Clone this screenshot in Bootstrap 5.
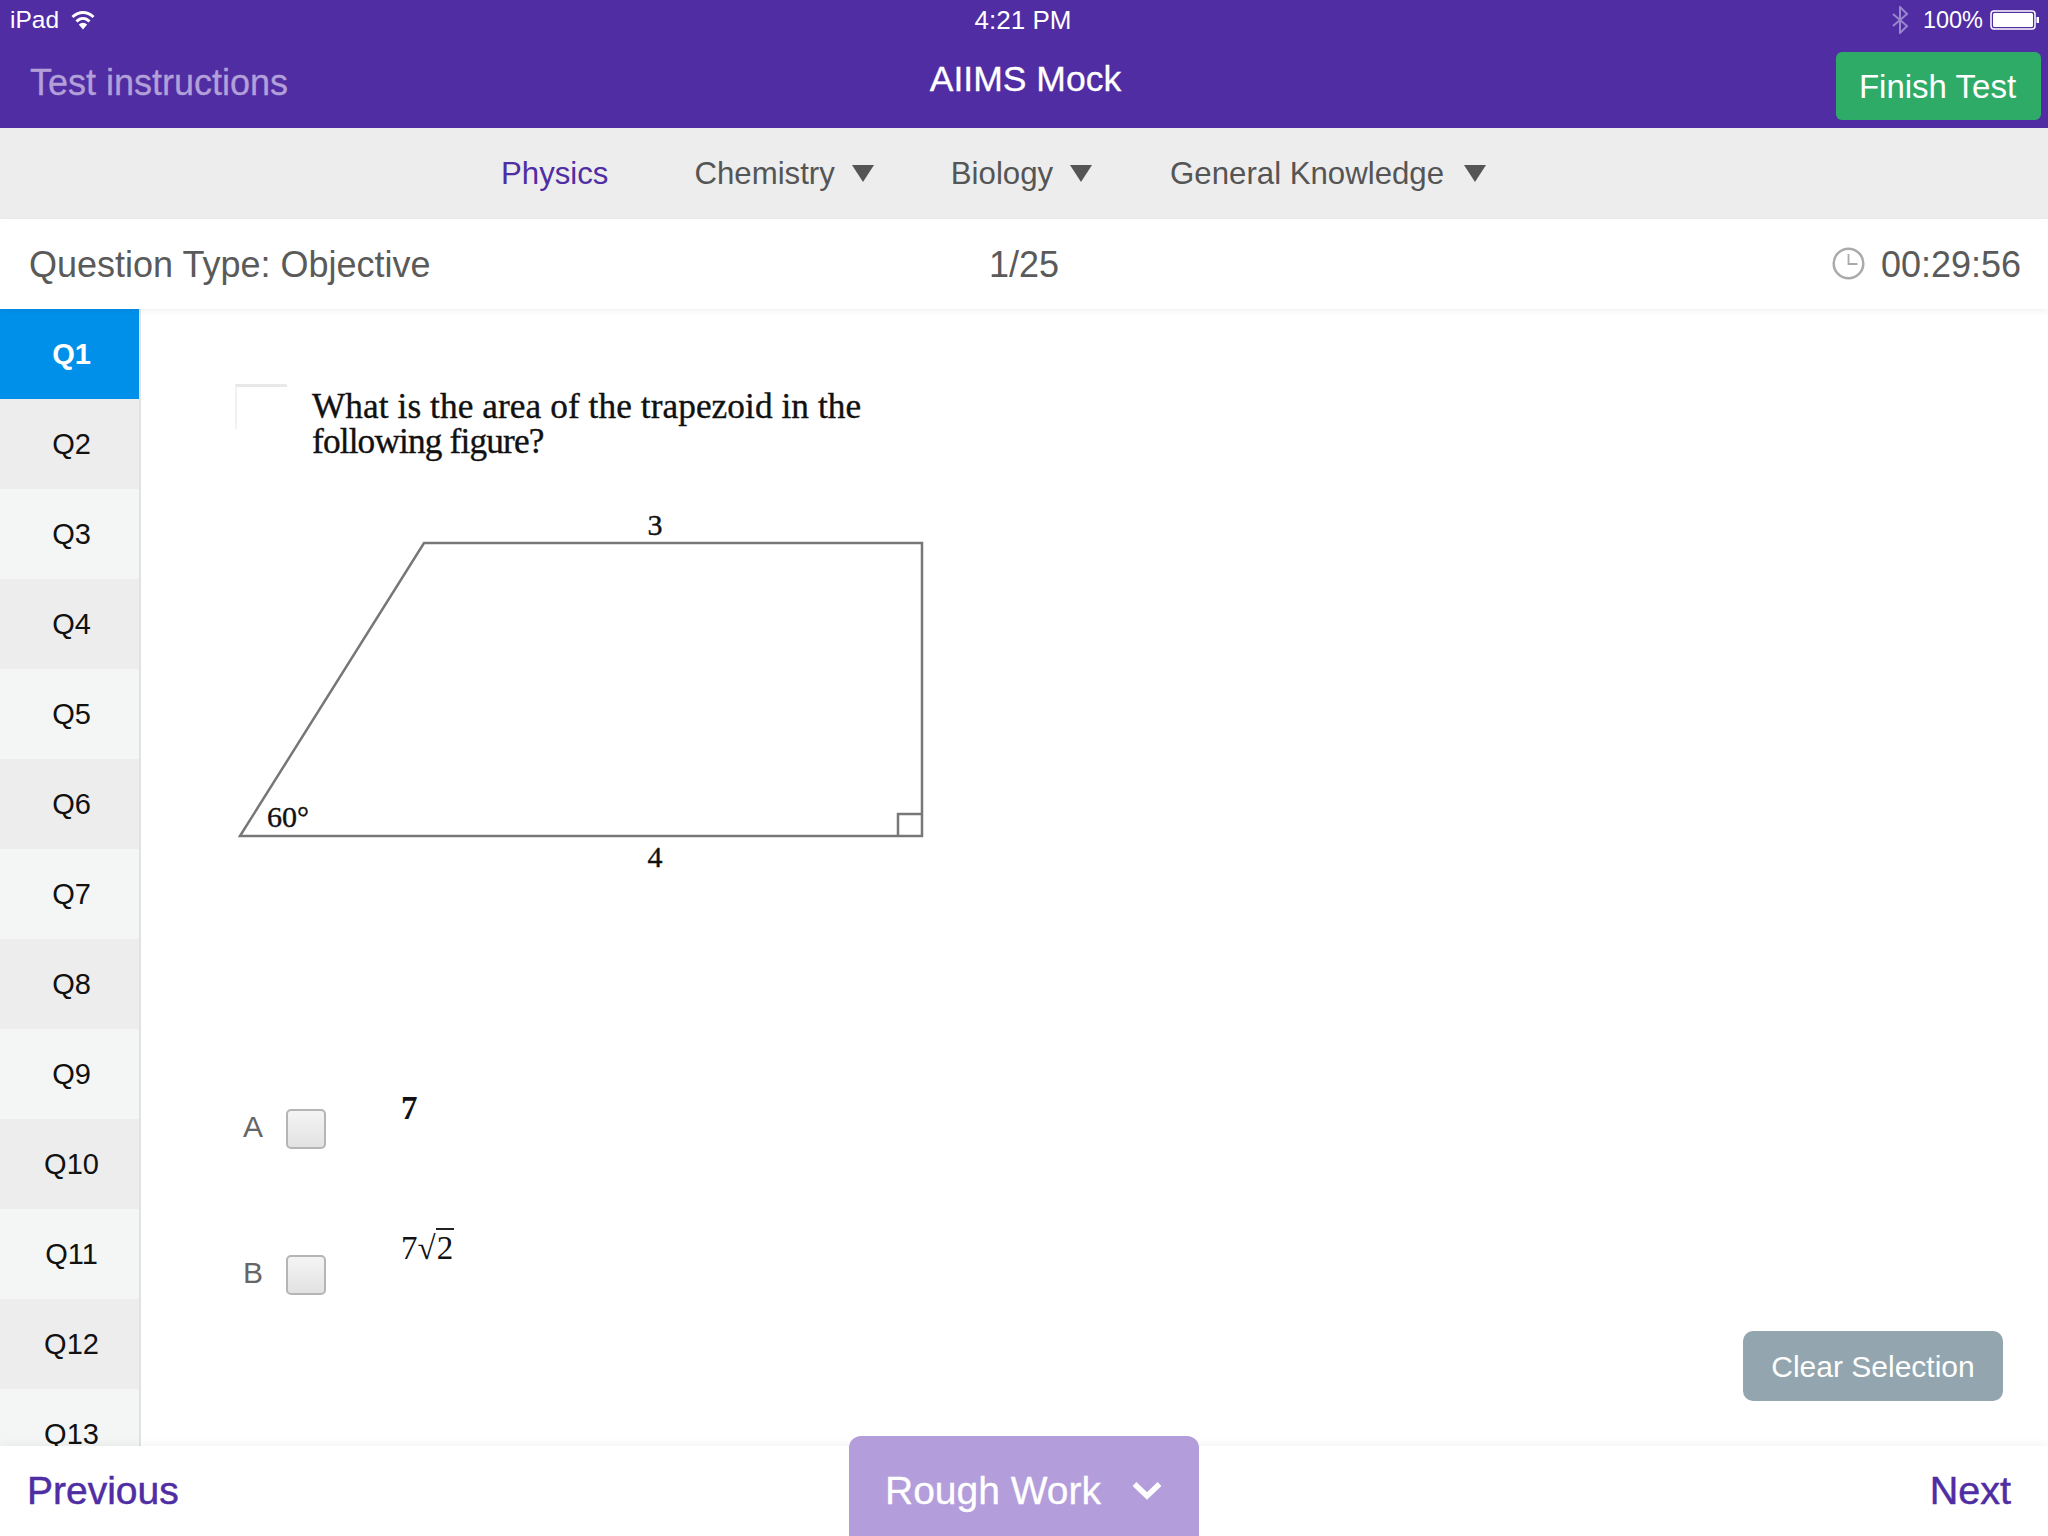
<!DOCTYPE html>
<html lang="en">
<head>
<meta charset="utf-8">
<title>AIIMS Mock</title>
<link href="https://cdn.jsdelivr.net/npm/bootstrap@5.3.0/dist/css/bootstrap.min.css" rel="stylesheet">
<style>
html,body{height:100%;}
body{width:2048px;height:1536px;overflow:hidden;font-family:"Liberation Sans",Arial,sans-serif;color:#555;background:#fff;}
.shell{height:1536px;}
.top-head{background:#502da3;height:128px;flex:none;}
.status-row{height:40px;padding:0 8px 0 10px;color:#fff;font-size:24.500px;line-height:40px;}
.status-side{flex:1 1 0;}
.status-time{font-size:26px;margin-left:-4px;}
.status-pct{font-size:23.500px;margin-right:7px;}
.wifi-mark{margin-left:4px;}
.bt-mark{margin-right:14px;}
.title-row{height:88px;padding:0 7px 0 30px;}
.test-link{flex:1 1 0;color:#b3a0d9;font-size:36px;text-decoration:none;margin-top:-3px;-webkit-text-stroke:.3px #b3a0d9;}
.test-name{color:#fff;font-size:35.500px;margin-top:-8px;margin-left:-20px;-webkit-text-stroke:.3px #fff;}
.title-end{flex:1 1 0;}
.finish-btn{background:#2fab68;border:0;color:#fff;font-size:33px;width:205px;height:68px;border-radius:6px;padding:2px 2px 0 0;margin-top:4px;}
.subject-bar{background:#ededed;height:91px;flex:none;padding:2px 0 0 501px;font-size:31.200px;color:#555;}
.subject-item{color:#555;text-decoration:none;}
.subject-item.on{color:#4f2da3;}
.subject-gap-a{margin-left:86px;}
.subject-gap-b{margin-left:77px;}
.subject-gap-c{margin-left:78px;}
.subject-tri{width:0;height:0;border-left:11.500px solid transparent;border-right:11.500px solid transparent;border-top:17px solid #555;margin-top:-2px;margin-left:17px;}
.subject-tri.wide-gap{margin-left:20px;}
.info-bar{height:90px;flex:none;padding:2px 27px 0 29px;font-size:36px;color:#5a5a5a;position:relative;z-index:2;box-shadow:0 2px 6px rgba(0,0,0,.06);background:#fff;}
.info-side{flex:1 1 0;}
.info-mid{margin-left:-2px;}
.clock-mark{margin-top:-4px;}
.content-row{flex:1 1 0;min-height:0;}
.q-rail{width:141px;flex:none;border-right:2px solid #e2e2e2;overflow:hidden;}
.q-item{height:90px;flex:none;color:#111;font-size:29px;padding:1px 0 0 4px;}
.q-item:nth-child(even){background:#ededed;}
.q-item:nth-child(odd){background:#f4f6f5;}
.q-item.on{background:#0090ea;color:#fff;font-weight:700;}
.q-pane{flex:1 1 0;min-width:0;padding:75px 45px 45px 94px;}
.q-head{gap:25px;flex:none;}
.q-mark{width:52px;height:45px;flex:none;border-top:3px solid #e8e8e8;border-left:2px solid #f2f2f2;}
.q-text{font-family:"Liberation Serif","Times New Roman",serif;font-size:35.300px;line-height:35px;color:#111;padding-top:5px;-webkit-text-stroke:.35px #111;letter-spacing:.06px;}
.q-line-two{letter-spacing:-.85px;}
.figure-box{display:block;flex:none;margin:46px 0 0 -3px;}
.opt-row{height:146px;}
.opt-row:last-child{height:70px;}
.opt-list{margin-top:208px;flex:none;}
.opt-letter{width:51px;padding-left:8px;font-size:30px;color:#666;margin-top:21px;}
.opt-check{width:40px;height:40px;border:2px solid #b5b5b5;border-radius:5px;background:linear-gradient(#f4f4f4,#e2e2e2);margin-top:26px;flex:none;}
.opt-val{font-family:"Liberation Serif","Times New Roman",serif;font-size:33px;color:#111;margin-left:75px;line-height:38px;}
.opt-bold{font-weight:700;padding-top:6px;}
.root-top{border-top:2px solid #222;padding:0 1px;}
.clear-btn{background:#93a5ae;border:0;color:#fff;font-size:30px;width:260px;height:70px;border-radius:10px;padding:0;}
.foot-bar{height:90px;flex:none;padding:0 37px 0 27px;background:#fff;box-shadow:0 -2px 8px rgba(0,0,0,.05);position:relative;z-index:2;}
.foot-link{color:#4f2da3;font-size:39px;text-decoration:none;-webkit-text-stroke:.5px #4f2da3;}
.foot-link.end-link{font-size:39.500px;}
.rough-btn{position:absolute;left:849px;top:-10px;width:350px;height:100px;background:#b39ddb;border:0;border-radius:12px 12px 0 0;color:#fff;font-size:39px;padding:10px 0 0 36px;gap:31px;-webkit-text-stroke:.3px #fff;}
</style>
</head>
<body>
<div class="shell d-flex flex-column">
  <header class="top-head">
    <div class="status-row d-flex align-items-center">
      <div class="status-side d-flex align-items-center gap-2">
        <span>iPad</span>
        <svg class="wifi-mark" width="24" height="20" viewBox="0 0 24 20" fill="none" stroke="#fff" stroke-width="3"><path d="M1.500 7C8 1 16 1 22.500 7"/><path d="M5.500 11.500C9.500 7.500 14.500 7.500 18.500 11.500"/><path d="M12 19.500l-4.200-5a6 6 0 0 1 8.400 0z" fill="#fff" stroke="none"/></svg>
      </div>
      <span class="status-time">4:21 PM</span>
      <div class="status-side d-flex align-items-center justify-content-end">
        <svg class="bt-mark" width="18" height="28" viewBox="0 0 18 28" fill="none" stroke="#9a86cf" stroke-width="2"><path d="M2 8l14 12-7 7V1l7 7L2 20"/></svg>
        <span class="status-pct">100%</span>
        <svg width="50" height="22" viewBox="0 0 50 22"><rect x="1" y="2" width="44" height="18" rx="3" fill="none" stroke="#fff" stroke-width="1.500"/><rect x="3" y="4" width="40" height="14" rx="1.500" fill="#fff"/><rect x="46.500" y="8" width="2.500" height="6" fill="#fff"/></svg>
      </div>
    </div>
    <div class="title-row d-flex align-items-center">
      <a class="test-link" href="#">Test instructions</a>
      <div class="test-name">AIIMS Mock</div>
      <div class="title-end d-flex justify-content-end"><button class="btn finish-btn" type="button">Finish Test</button></div>
    </div>
  </header>

  <nav class="subject-bar d-flex align-items-center">
    <a class="subject-item on" href="#">Physics</a>
    <a class="subject-item subject-gap-a" href="#">Chemistry</a><span class="subject-tri"></span>
    <a class="subject-item subject-gap-b" href="#">Biology</a><span class="subject-tri"></span>
    <a class="subject-item subject-gap-c" href="#">General Knowledge</a><span class="subject-tri wide-gap"></span>
  </nav>

  <div class="info-bar d-flex align-items-center">
    <div class="info-side">Question Type: Objective</div>
    <div class="info-mid">1/25</div>
    <div class="info-side d-flex align-items-center justify-content-end gap-3">
      <svg class="clock-mark" width="33" height="33" viewBox="0 0 33 33" fill="none" stroke="#aaa" stroke-width="2.500"><circle cx="16.500" cy="16.500" r="14.800"/><path d="M16.500 7v10h9" stroke-width="1.800"/></svg>
      <span>00:29:56</span>
    </div>
  </div>

  <div class="content-row d-flex">
    <aside class="q-rail d-flex flex-column">
      <div class="q-item on d-flex align-items-center justify-content-center">Q1</div>
      <div class="q-item d-flex align-items-center justify-content-center">Q2</div>
      <div class="q-item d-flex align-items-center justify-content-center">Q3</div>
      <div class="q-item d-flex align-items-center justify-content-center">Q4</div>
      <div class="q-item d-flex align-items-center justify-content-center">Q5</div>
      <div class="q-item d-flex align-items-center justify-content-center">Q6</div>
      <div class="q-item d-flex align-items-center justify-content-center">Q7</div>
      <div class="q-item d-flex align-items-center justify-content-center">Q8</div>
      <div class="q-item d-flex align-items-center justify-content-center">Q9</div>
      <div class="q-item d-flex align-items-center justify-content-center">Q10</div>
      <div class="q-item d-flex align-items-center justify-content-center">Q11</div>
      <div class="q-item d-flex align-items-center justify-content-center">Q12</div>
      <div class="q-item d-flex align-items-center justify-content-center">Q13</div>
    </aside>
    <main class="q-pane d-flex flex-column">
      <div class="q-head d-flex">
        <div class="q-mark"></div>
        <div class="q-text">What is the area of the trapezoid in the<br><span class="q-line-two">following figure?</span></div>
      </div>
      <svg class="figure-box" width="700" height="370" viewBox="232 505 700 370">
        <g fill="none" stroke="#777" stroke-width="2.500">
          <path d="M240 836L424 543H922V836Z"/>
          <path d="M898 836V814H922"/>
        </g>
        <g font-family="Liberation Serif, serif" font-size="30" fill="#111" stroke="#111" stroke-width=".4">
          <text x="655" y="535" text-anchor="middle">3</text>
          <text x="655" y="867" text-anchor="middle">4</text>
          <text x="267" y="827">60°</text>
        </g>
      </svg>
      <div class="opt-list">
        <div class="opt-row d-flex">
          <div class="opt-letter">A</div>
          <div class="opt-check"></div>
          <div class="opt-val opt-bold">7</div>
        </div>
        <div class="opt-row d-flex">
          <div class="opt-letter">B</div>
          <div class="opt-check"></div>
          <div class="opt-val">7√<span class="root-top">2</span></div>
        </div>
      </div>
      <div class="mt-auto d-flex justify-content-end"><button class="btn clear-btn" type="button">Clear Selection</button></div>
    </main>
  </div>

  <footer class="foot-bar d-flex align-items-center justify-content-between">
    <a class="foot-link" href="#">Previous</a>
    <button class="btn rough-btn d-flex align-items-center" type="button">
      <span>Rough Work</span>
      <svg width="30" height="20" viewBox="0 0 30 20" fill="none" stroke="#fff" stroke-width="5.500"><path d="M2.500 3l12.500 12L27.500 3"/></svg>
    </button>
    <a class="foot-link end-link" href="#">Next</a>
  </footer>
</div>
<script src="https://cdn.jsdelivr.net/npm/bootstrap@5.3.0/dist/js/bootstrap.bundle.min.js"></script>
</body>
</html>
